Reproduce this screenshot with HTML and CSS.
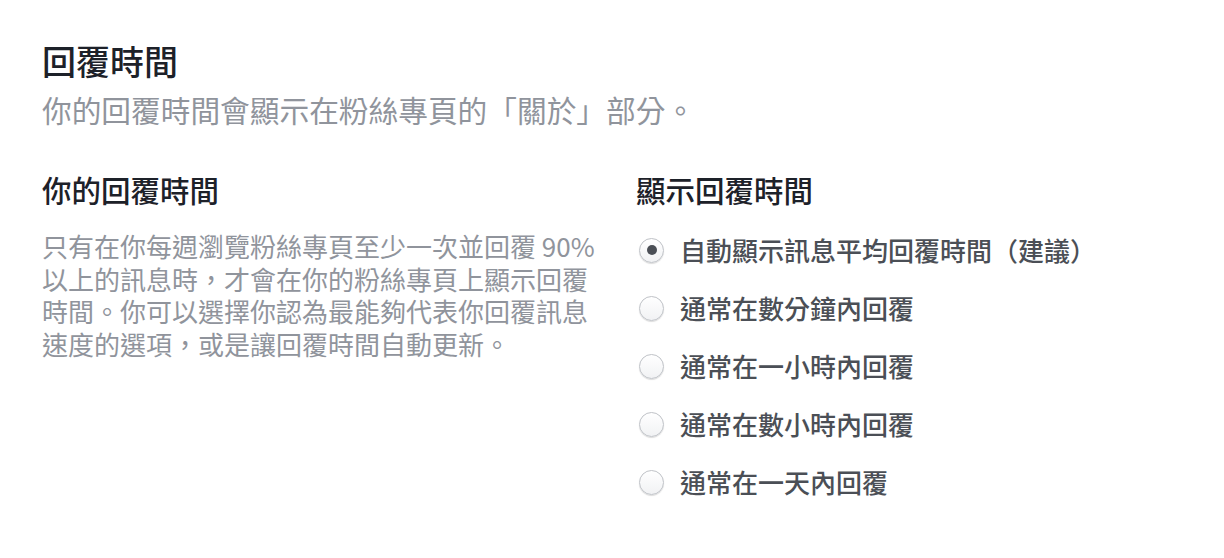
FILE: index.html
```html
<!DOCTYPE html>
<html lang="zh-Hant">
<head>
<meta charset="utf-8">
<title>回覆時間</title>
<link rel="stylesheet" href="styles.css">
</head>
<body>
<main class="page">
  <header class="intro">
    <h1 class="title">回覆時間</h1>
    <p class="subtitle">你的回覆時間會顯示在粉絲專頁的「關於」部分。</p>
  </header>
  <section class="columns">
    <div class="col col-left">
      <h2 class="heading">你的回覆時間</h2>
      <p class="desc">只有在你每週瀏覽粉絲專頁至少一次並回覆 90% 以上的訊息時，才會在你的粉絲專頁上顯示回覆時間。你可以選擇你認為最能夠代表你回覆訊息速度的選項，或是讓回覆時間自動更新。</p>
    </div>
    <div class="col col-right">
      <h2 class="heading">顯示回覆時間</h2>
      <ul class="options">
        <li class="option"><span class="radio checked"></span><span class="label">自動顯示訊息平均回覆時間（建議）</span></li>
        <li class="option"><span class="radio"></span><span class="label">通常在數分鐘內回覆</span></li>
        <li class="option"><span class="radio"></span><span class="label">通常在一小時內回覆</span></li>
        <li class="option"><span class="radio"></span><span class="label">通常在數小時內回覆</span></li>
        <li class="option"><span class="radio"></span><span class="label">通常在一天內回覆</span></li>
      </ul>
    </div>
  </section>
</main>
</body>
</html>
```
FILE: styles.css
```css
html, body {
  margin: 0;
  padding: 0;
  background: #ffffff;
}

body {
  font-family: "Noto Sans CJK TC", "Noto Sans", "Liberation Sans", sans-serif;
}

.page {
  padding: 40px 42px 0 42px;
}

.title {
  margin: 0;
  font-size: 34px;
  line-height: 42px;
  font-weight: 500;
  color: #1d2129;
}

.subtitle {
  margin: 8px 0 0 0;
  font-size: 29.7px;
  line-height: 40px;
  font-weight: 400;
  color: #90949c;
}

.columns {
  display: grid;
  grid-template-columns: 560px 1fr;
  column-gap: 34px;
  margin-top: 39px;
}

.heading {
  margin: 0;
  font-size: 29.5px;
  line-height: 40px;
  font-weight: 500;
  color: #1d2129;
}

.desc {
  margin: 21px 0 0 0;
  font-size: 26px;
  line-height: 32.5px;
  color: #90949c;
}

.options {
  list-style: none;
  margin: 12px 0 0 0;
  padding: 0;
}

.option {
  display: flex;
  align-items: center;
  height: 58px;
}

.radio {
  box-sizing: border-box;
  width: 25px;
  height: 25px;
  margin-left: 3px;
  margin-right: 16px;
  border-radius: 50%;
  border: 1px solid #bfc2c7;
  background: linear-gradient(#ffffff, #f1f2f4);
  box-shadow: 0 1px 1px rgba(0, 0, 0, 0.14);
  display: flex;
  align-items: center;
  justify-content: center;
  flex: none;
}

.radio.checked::after {
  content: "";
  width: 10px;
  height: 10px;
  border-radius: 50%;
  background: #4b4f56;
}

.label {
  font-size: 26px;
  line-height: 32px;
  font-weight: 500;
  color: #4b4f56;
}
```
